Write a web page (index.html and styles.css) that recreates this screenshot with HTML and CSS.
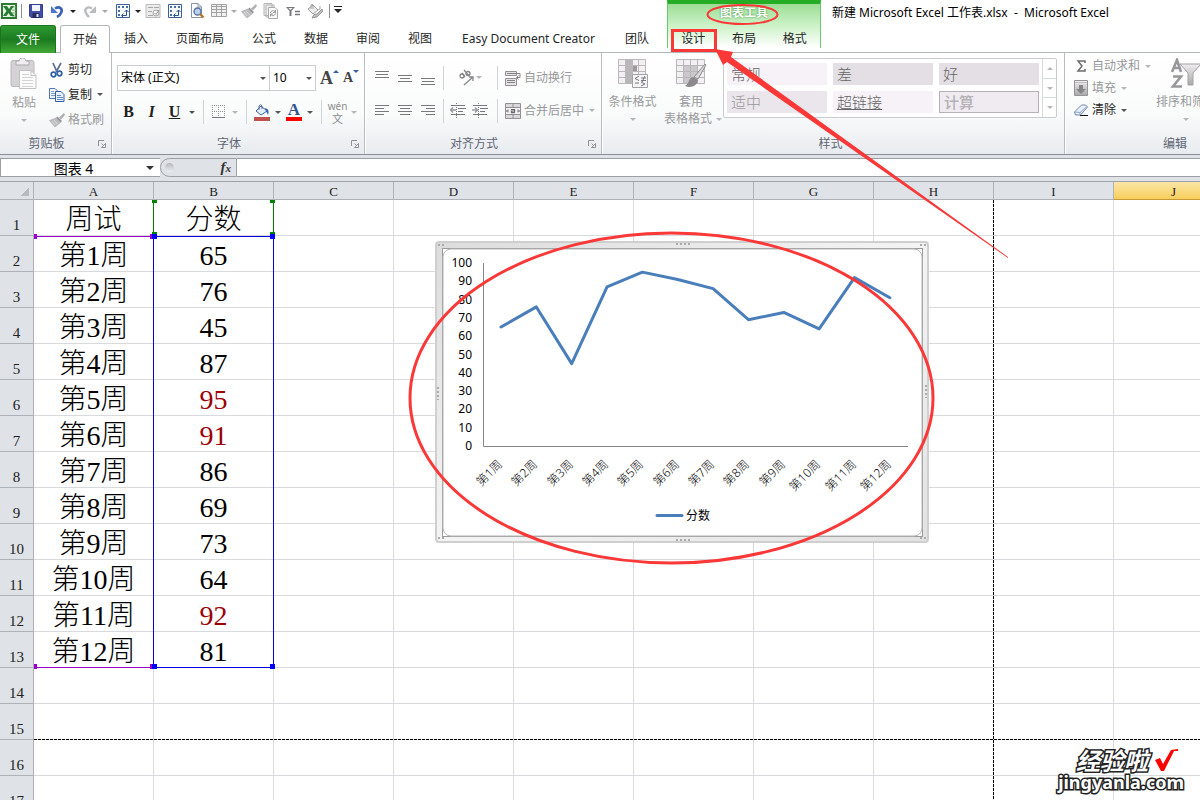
FILE: index.html
```html
<!DOCTYPE html>
<html lang="zh-CN">
<head>
<meta charset="utf-8">
<title>新建 Microsoft Excel 工作表.xlsx - Microsoft Excel</title>
<link rel="stylesheet" href="styles.css">
</head>
<body>
<svg class="defs" width="0" height="0" aria-hidden="true">
  <defs>
    <linearGradient id="gFrame" x1="0" y1="0" x2="1" y2="1"><stop offset="0" stop-color="#dcdcdc"/><stop offset=".5" stop-color="#f4f4f4"/><stop offset="1" stop-color="#e2e2e2"/></linearGradient>
    <linearGradient id="gGrey" x1="0" y1="0" x2="0" y2="1"><stop offset="0" stop-color="#f0edf0"/><stop offset="1" stop-color="#a9a7a9"/></linearGradient>
    <symbol id="brush" viewBox="0 0 16 16"><path d="M15 1 10 5.500l2 2L16 3z" fill="#b0afb1"/><path d="M8.500 4.500 13 9l-1.500 1.500L7 6z" fill="#97969a"/><path d="M7 6 .5 8.500 6 15l5.500-4.500z" fill="#bdbcbe" stroke="#b0afb2" stroke-width=".7"/><path d="m3 9 3 4M5 8l3.500 4" stroke="#dcdcdc"/></symbol>
    <symbol id="pivot" viewBox="0 0 16 16"><path d="M1.500 1.500h13v13h-13z" fill="#f4f8ff" stroke="#3d5f9a"/><path d="M3 3h2v2H3zM3 7h2v2H3zM3 11h2v2H3zM7 3h2v2H7zM11 3h2v2h-2z" fill="#4a6ca6"/><path d="M7 12.500h4.500V7M9.500 9l2-2 2 2M8.500 10.500l-2 2 2 2" fill="none" stroke="#2f548f"/></symbol>
    <symbol id="launch" viewBox="0 0 8 8"><path d="M.5 6V.5H6M3.500 3.500l2 2M7.500 3.500v4h-4z" fill="none" stroke="#8d9197"/></symbol>
  </defs>
</svg>

<div class="app">
  <header class="header">
    <div class="header-main">
      <div class="qat">
        <button class="q excel" aria-label="Excel"><svg width="16" height="16" viewBox="0 0 16 16"><path d="M1 1h14v14H1z" fill="#e9f4e5" stroke="#2b7a32" stroke-width="2"/><path d="M11 4h4M11 7h4M11 10h4M11 13h4" stroke="#7eb37f"/><path d="M2 3h4l2 3 2-3h3L9.500 8l4 5h-4L7.500 10 5.500 13H2l3.500-5z" fill="#267c31"/></svg></button>
        <i class="qsep"></i>
        <button class="q save" aria-label="保存"><svg width="14" height="14" viewBox="0 0 14 14"><path d="M.5.5h13v13H2L.5 12z" fill="#4450a8" stroke="#333f91"/><path d="M3 1h8v6H3z" fill="#f1f4ff"/><path d="M3.500 9h7v5h-7z" fill="#252d5c"/><path d="M7.500 10h2v3h-2z" fill="#dde3fa"/></svg></button>
        <button class="q undo" aria-label="撤消"><svg width="15" height="15" viewBox="0 0 15 15"><path d="M5 4.500c5-3 8 1 6 4.500-.8 2-2 3-4 4" fill="none" stroke="#3a63b5" stroke-width="2.600"/><path d="M1 2v7h7z" fill="#4a77c8"/></svg></button>
        <button class="caret c14 dark" aria-label="撤消列表"></button>
        <button class="q undo" aria-label="恢复"><svg width="15" height="15" viewBox="0 0 15 15"><path d="M10 4.500c-5-3-8 1-6 4.500.8 2 2 3 3 4" fill="none" stroke="#b9bbbe" stroke-width="2.400"/><path d="M14 2v7H7z" fill="#b9bbbe"/></svg></button>
        <button class="caret c14" aria-label="恢复列表"></button>
        <button class="q" aria-label="数据透视表"><svg width="16" height="16"><use href="#pivot"/></svg></button>
        <button class="caret c8 dark" aria-label="数据透视表列表"></button>
        <button class="q" aria-label="表单"><svg width="16" height="16" viewBox="0 0 16 16"><path d="M1 1.500h14v13H1z" fill="#ececed" stroke="#b9babc"/><path d="M3 4.500h5M3 8.500h4M3 12.500h5M9 4.500h5" stroke="#a5a6a8"/><circle cx="11" cy="10" r="3" fill="#f7f7f7" stroke="#a5a6a8"/><path d="m9.500 10 1.500 1.500L14 7" fill="none" stroke="#909193"/></svg></button>
        <button class="q" aria-label="透视图"><svg width="16" height="16"><use href="#pivot"/></svg></button>
        <button class="q" aria-label="打印预览"><svg width="16" height="16" viewBox="0 0 16 16"><path d="M2.500.5H9L12.500 4v10.500h-10z" fill="#fff" stroke="#8893a5"/><path d="M9 .5V4h3.500" fill="none" stroke="#8893a5"/><circle cx="8.500" cy="8.500" r="3.500" fill="#b7d0f0" stroke="#51719f" stroke-width="1.300"/><path d="m11 11 3.500 3.500" stroke="#b27529" stroke-width="2.400"/></svg></button>
        <button class="q" aria-label="表格"><svg width="16" height="16" viewBox="0 0 16 16"><path d="M.5 1.500h15v12H.5z" fill="#f1f1f1" stroke="#a0a1a3"/><path d="M.5 3.500h15M.5 6.500h15M.5 9.500h15M5.500 1v13M10.500 1v13" stroke="#a0a1a3"/></svg></button>
        <button class="caret c8" aria-label="表格列表"></button>
        <button class="q" aria-label="格式刷"><svg width="16" height="16"><use href="#brush"/></svg></button>
        <button class="q" aria-label="刷新"><svg width="16" height="16" viewBox="0 0 16 16"><path d="M1 .5h8v12H1zM3 2h8v12H3z" fill="#efeff0" stroke="#b3b4b6"/><path d="M5.500 4.500H12L14.500 7v8.500h-9z" fill="#fafafa" stroke="#a9aaac"/><path d="M7.500 10c.5-3 4-3 5-.5M12.500 10.500c-1 3-4 2.500-5 .5M12.500 7v2.500H10M7.500 13.500V11H10" fill="none" stroke="#98999b"/></svg></button>
        <button class="q" aria-label="筛选"><svg width="16" height="16" viewBox="0 0 16 16"><path d="M1 4h9L6.500 8v5h-2V8z" fill="#77787b"/><path d="M3.500 5h4L5.500 7z" fill="#fff"/><path d="M10 8.500h5M10 11.500h5" stroke="#77787b" stroke-width="1.500"/></svg></button>
        <button class="q" aria-label="填充颜色"><svg width="16" height="16" viewBox="0 0 16 16"><path d="m1 6 5-4 5 5-5 4z" fill="#eee" stroke="#9a9b9d"/><path d="M4 6V2q1-2 2 0v4M11 7q3 0 2-4" fill="none" stroke="#a4a5a7"/><path d="m15 6-5 5-3 .5L5 15l5-1 2-2 4-4z" fill="#c0c1c3" stroke="#969799"/></svg></button>
        <i class="qsep"></i>
        <button class="caret c12 dark more" aria-label="自定义快速访问工具栏"></button>
      </div>
      <nav class="tabs">
        <button class="tab file">文件</button>
        <button class="tab active">开始</button>
        <button class="tab">插入</button>
        <button class="tab">页面布局</button>
        <button class="tab">公式</button>
        <button class="tab">数据</button>
        <button class="tab">审阅</button>
        <button class="tab">视图</button>
        <button class="tab">Easy Document Creator</button>
        <button class="tab">团队</button>
      </nav>
    </div>
    <div class="context">
      <div class="context-title">图表工具</div>
      <nav class="context-tabs">
        <button class="tab">设计</button>
        <button class="tab">布局</button>
        <button class="tab">格式</button>
      </nav>
    </div>
    <h1 class="doc-title">新建 Microsoft Excel 工作表.xlsx&nbsp; -&nbsp; Microsoft Excel</h1>
  </header>

  <section class="ribbon">
    <div class="group clipboard">
      <div class="group-body">
        <button class="big off paste">
          <svg width="30" height="32" viewBox="0 0 30 32"><rect x="2" y="2.500" width="23" height="26" rx="2" fill="#d5d2d5" stroke="#bab7ba"/><path d="M7 3h3c0-4 7-4 7 0h3v4H7z" fill="#efedef" stroke="#aaa7aa"/><path d="M10.500 12.500H22l5 5v13H10.500z" fill="#fcfbfc" stroke="#c3c0c3"/><path d="M22 12.500v5h5" fill="none" stroke="#c3c0c3"/><path d="M13 16.500h7M13 19.500h11M13 22.500h11M13 25.500h11M13 28.500h11" stroke="#d6d3d6"/></svg>
          <span>粘贴</span><i class="tri"></i>
        </button>
        <div class="stack clip-stack">
          <button class="cmd"><svg width="16" height="16" viewBox="0 0 16 16"><path d="m4 1 4 9M12 1 7 10" stroke="#5c6f8e" stroke-width="1.700"/><circle cx="4.500" cy="12.500" r="2.300" fill="none" stroke="#2d5ea8" stroke-width="1.700"/><circle cx="10.500" cy="11.500" r="2.300" fill="none" stroke="#2d5ea8" stroke-width="1.700"/></svg>剪切</button>
          <button class="cmd"><svg width="16" height="16" viewBox="0 0 16 16"><path d="M.5 1.500H6l3 3v7H.5z" fill="#f1f6fd" stroke="#5277b4"/><path d="M2 4.500h3M2 6.500h5M2 8.500h5" stroke="#7d9ccc"/><path d="M6.500 4.500H12l3 3v7H6.500z" fill="#e9f1fc" stroke="#335fa5"/><path d="M8 8.500h4M8 10.500h6M8 12.500h6" stroke="#6389c2"/></svg>复制<i class="tri dark"></i></button>
          <button class="cmd off"><svg width="16" height="16"><use href="#brush"/></svg>格式刷</button>
        </div>
      </div>
      <div class="group-label"><span>剪贴板</span><svg width="8" height="8"><use href="#launch"/></svg></div>
    </div>

    <div class="group font">
      <div class="group-body column">
        <div class="font-row">
          <div class="combo"><select class="font-name" aria-label="字体"><option>宋体 (正文)</option></select><i class="tri dark"></i></div>
          <div class="combo"><select class="font-size" aria-label="字号"><option>10</option></select><i class="tri dark"></i></div>
          <button class="grow" aria-label="增大字号"><span>A</span><i></i></button>
          <button class="grow shrink" aria-label="减小字号"><span>A</span><i></i></button>
        </div>
        <div class="format-row">
          <button class="fmt bold">B</button>
          <button class="fmt italic">I</button>
          <button class="fmt underline">U</button>
          <i class="tri dark"></i><i class="vsep"></i>
          <button class="ico" aria-label="边框"><svg width="16" height="16" viewBox="0 0 16 16"><path d="M1 1.500h13M1 7.500h13M1.500 1v12M7.500 1v12M13.500 1v12" stroke="#8f9195" stroke-dasharray="1 1"/><path d="M1 13.500h13" stroke="#77797d"/></svg></button>
          <i class="tri"></i><i class="vsep"></i>
          <button class="ico" aria-label="填充颜色"><svg width="18" height="18" viewBox="0 0 18 18"><path d="m3 8 5-5 6 5-6 4z" fill="#e4eefb" stroke="#3c64a1"/><path d="M6 7V3q2-3 3 0v3" fill="none" stroke="#55719d"/><path d="M12 5c4 1 4 4 3 7l-2-4z" fill="#3568b3"/><path d="M1 14h16v4H1z" fill="#c0504d"/></svg></button>
          <i class="tri dark"></i>
          <button class="ico" aria-label="字体颜色"><span class="font-color">A</span></button>
          <i class="tri dark"></i><i class="vsep"></i>
          <button class="ico pinyin" aria-label="拼音"><span>wén</span><b>文</b></button>
          <i class="tri"></i>
        </div>
      </div>
      <div class="group-label"><span>字体</span><svg width="8" height="8"><use href="#launch"/></svg></div>
    </div>

    <div class="group align">
      <div class="group-body align-grid">
        <button class="ico" aria-label="顶端对齐"><svg width="16" height="16"><path d="M1 1.500h14M2 4.500h12M1 7.500h14" stroke="#77797c"/></svg></button>
        <button class="ico" aria-label="垂直居中"><svg width="16" height="16"><path d="M1 5.500h14M3 8.500h10M1 11.500h14" stroke="#77797c"/></svg></button>
        <button class="ico" aria-label="底端对齐"><svg width="16" height="16"><path d="M1 8.500h14M2 11.500h12M1 14.500h14" stroke="#77797c"/></svg></button>
        <i class="vsep"></i>
        <button class="ico wide" aria-label="方向"><svg width="18" height="18" viewBox="0 0 18 18"><g fill="none" stroke="#858689" stroke-width="1.300"><circle cx="4" cy="7" r="2"/><path d="m4 4 3 4"/><path d="m6 1 5 6"/><circle cx="10" cy="4.500" r="2"/><path d="m6 16 9-8M15 12V8h-4"/></g></svg><i class="tri"></i></button>
        <i class="vsep"></i>
        <button class="cmd off"><svg width="16" height="16" viewBox="0 0 16 16"><path d="M.5 1.500h11v4H.5zM.5 8.500h11v7H.5z" fill="#e5e3e5" stroke="#929094"/><path d="M2 3.500h11M2 10.500h8M2 12.500h8" stroke="#858387"/><path d="M13 3.500h2v4h-3M13.500 5.500l-2 2 2 2" fill="none" stroke="#858387"/></svg>自动换行</button>

        <button class="ico" aria-label="左对齐"><svg width="16" height="16"><path d="M1 2.500h14M1 5.500h9M1 8.500h14M1 11.500h9" stroke="#77797c"/></svg></button>
        <button class="ico" aria-label="居中"><svg width="16" height="16"><path d="M1 2.500h14M3 5.500h10M1 8.500h14M3 11.500h10" stroke="#77797c"/></svg></button>
        <button class="ico" aria-label="右对齐"><svg width="16" height="16"><path d="M1 2.500h14M6 5.500h9M1 8.500h14M6 11.500h9" stroke="#77797c"/></svg></button>
        <i class="vsep"></i>
        <div class="indent">
          <button class="ico" aria-label="减少缩进"><svg width="16" height="16"><path d="M1 2.500h14M8 5.500h8M8 8.500h5M1 11.500h14" stroke="#77797c"/><path d="M6.500 0v15" stroke="#77797c" stroke-dasharray="1 1"/><path d="M6 7H1M3 4.500.5 7 3 9.500" fill="none" stroke="#9a9b9e" stroke-width="1.500"/></svg></button>
          <button class="ico" aria-label="增加缩进"><svg width="16" height="16"><path d="M1 2.500h14M8 5.500h8M8 8.500h5M1 11.500h14" stroke="#77797c"/><path d="M6.500 0v15" stroke="#77797c" stroke-dasharray="1 1"/><path d="M0 7h5M3 4.500 5.500 7 3 9.500" fill="none" stroke="#9a9b9e" stroke-width="1.500"/></svg></button>
        </div>
        <i class="vsep"></i>
        <button class="cmd off"><svg width="16" height="16" viewBox="0 0 16 16"><path d="M.5.5h15v15H.5z" fill="#dbd8db" stroke="#939095"/><path d="M.5 4.500h15M.5 11.500h15M8 0v4M8 12v4" stroke="#939095"/><path d="M1 5h14v6H1z" fill="#f5f3f5"/><path d="M1.500 8H4M12 8h2.500M3 6.500 1.500 8 3 9.500M13 6.500 14.500 8 13 9.500" fill="none" stroke="#777"/><path d="M6 6.500h3.500v3.300M9.500 8H6.500v1.700h3" fill="none" stroke="#666" stroke-width="1.200"/></svg>合并后居中<i class="tri"></i></button>
      </div>
      <div class="group-label"><span>对齐方式</span><svg width="8" height="8"><use href="#launch"/></svg></div>
    </div>

    <div class="group styles">
      <div class="group-body">
        <button class="big off cond"><svg width="30" height="30" viewBox="0 0 30 30"><path d="M.5.500h27v24H.5z" fill="#f3f0f3" stroke="#bbb7bb"/><path d="M7 1h7v24H7z" fill="#b9b6b9"/><path d="M14 7h5v5h-5zM14 18h3v6h-3z" fill="#9d9a9e"/><path d="M.5 6.500h27M.5 12.500h27M.5 18.500h27M7.500.500v24M14.500.500v24M20.500.500v24" stroke="#bbb7bb"/><path d="M14.500 15.500h15v13h-15z" fill="#f6f5f6" stroke="#a3a1a4"/><path d="m21 17-4 2.500 4 2M17 24h4M23 19h5M23 21.500h5M27 17l-3 6M23 23l4 2-4 2" fill="none" stroke="#77757a"/></svg><span>条件格式</span><i class="tri"></i></button>
        <button class="big off table-fmt"><svg width="32" height="30" viewBox="0 0 32 30"><path d="M1.500.500h28v24h-28z" fill="#f3f0f3" stroke="#b9b6b9"/><path d="M8 7h15v17H8z" fill="#cbc8cb"/><path d="M1.500 6.500h28M1.500 12.500h28M1.500 18.500h28M8.500.500v24M15.500.500v24M22.500.500v24" stroke="#b9b6b9"/><path d="m31 6-8 14-4-2L30 5z" fill="#d9d7d9" stroke="#8e8b90"/><path d="M18 18c-5 1-3 6-8 9 5 2 12 1 13-6z" fill="#8d8a8e"/></svg><span>套用</span><span class="two">表格格式<i class="tri"></i></span></button>
        <div class="gallery">
          <div class="swatches">
            <button class="sw">常规</button><button class="sw bad">差</button><button class="sw good">好</button>
            <button class="sw neutral">适中</button><button class="sw link">超链接</button><button class="sw calc">计算</button>
          </div>
          <div class="scroller"><button aria-label="上一行"><i class="tri up"></i></button><button aria-label="下一行"><i class="tri"></i></button><button aria-label="其他"><i class="tri line"></i></button></div>
        </div>
      </div>
      <div class="group-label"><span>样式</span></div>
    </div>

    <div class="group edit">
      <div class="group-body">
        <div class="stack edit-stack">
          <button class="cmd off"><svg width="16" height="16" viewBox="0 0 16 16"><path d="M12 5V3H5l4 5-4 5h7v-2" fill="none" stroke="#6b6c6f" stroke-width="1.500"/></svg>自动求和<i class="tri"></i></button>
          <button class="cmd off"><svg width="16" height="16" viewBox="0 0 16 16"><path d="M1.500.500h13v15h-13z" fill="url(#gGrey)" stroke="#959497"/><path d="M2 2.500h12" stroke="#c3c1c4"/><path d="M6 5h4v4h3l-5 5-5-5h3z" fill="#858487"/></svg>填充<i class="tri"></i></button>
          <button class="cmd"><svg width="16" height="16" viewBox="0 0 16 16"><path d="m1.500 10 7-7h4l2 2-7 8h-5z" fill="#e8f0fb" stroke="#7089b5"/><path d="m2 10 5 .5 7-6M7 10.500v2" fill="none" stroke="#8fa5c9"/><path d="M7 13.500h8" stroke="#111"/></svg>清除<i class="tri dark"></i></button>
        </div>
        <button class="big off sort"><svg width="32" height="32" viewBox="0 0 32 32"><g fill="none" stroke="#98979a" stroke-width="2.600"><path d="m2 14 5-12 4 12M4 10h6"/><path d="M3 18.500h8L3 28.500h9"/></g><path d="M10 6h21L23 15v12h-5V15z" fill="url(#gGrey)" stroke="#a3a2a5"/></svg><span>排序和筛选</span><i class="tri"></i></button>
      </div>
      <div class="group-label"><span>编辑</span></div>
    </div>
  </section>

  <div class="formula-bar">
    <div class="name-box"><input type="text" value="图表 4" aria-label="名称框"><i class="tri dark"></i></div>
    <div class="fx-area"><i class="knob"></i><button class="fx" aria-label="插入函数">f<small>x</small></button></div>
    <input class="formula" type="text" aria-label="编辑栏">
  </div>

  <main class="sheet">
    <table class="cells">
      <thead><tr id="columns"><th class="corner" aria-label="全选"></th></tr></thead>
      <tbody id="rows"></tbody>
    </table>

    <svg class="ranges" width="1200" height="618" aria-hidden="true">
      <path d="M993.500 18v600M34 557.500h1166" stroke="#000" stroke-dasharray="3 1"/>
      <path d="M34 54.500h120M34 485.500h120" stroke="#9900cc"/>
      <path d="M153.500 18v36M273.500 18v36" stroke="#008000"/>
      <path d="M153.500 54.500h120v431h-120z" fill="none" stroke="#0000e0"/>
      <path d="M152 18h5v3h-5zM270 18h5v3h-5zM152 50h5v3h-5zM270 50h5v3h-5z" fill="#008000"/>
      <path d="M34 52h3v5h-3zM150 52h3v5h-3zM34 482h3v5h-3zM150 482h3v5h-3z" fill="#9900cc"/>
      <path d="M152 52h5v5h-5zM270 52h5v5h-5zM152 482h5v5h-5zM270 482h5v5h-5z" fill="#00f"/>
    </svg>

    <svg class="chart" width="494" height="303" viewBox="435 241 494 303" role="img" aria-label="分数折线图">
      <rect x="436" y="242" width="492" height="300" rx="3" fill="url(#gFrame)" stroke="#cfcfcf" stroke-width="2"/>
      <rect x="442.500" y="248.500" width="480" height="288" fill="#fff" stroke="#9b9b9b"/>
      <rect x="443" y="249" width="479" height="287" rx="8" fill="#fff" stroke="#b5b5b5"/>
      <g fill="none" stroke="#aaa" stroke-width="2" stroke-dasharray="2 2">
        <path d="M676 244h14M676 540h14M438 387v13M926 385v13M438 245h6M438 538h6M920 245h6M920 538h6"/>
      </g>
      <path d="M483.500 263v183.500H908" fill="none" stroke="#868686"/>
      <g id="plot"></g>
      <path d="M657 515.500h25" stroke="#4a7ebb" stroke-width="3" stroke-linecap="round"/>
      <text class="legend" x="686" y="520">分数</text>
    </svg>

    <div class="watermark"><div>经验啦<svg width="24" height="24" viewBox="0 0 24 24"><path d="m1 12 5-2 3 6L17 2l7-1v2h-4L10 23H7z" fill="#f00"/></svg></div><div class="site">jingyanla.com</div></div>
  </main>

  <svg class="marks" width="1200" height="800" aria-hidden="true">
    <g fill="none" stroke="#fb3838">
      <ellipse cx="671.500" cy="398" rx="261.500" ry="165" stroke-width="3"/>
      <ellipse cx="742.500" cy="14.500" rx="35" ry="9.500" stroke-width="2"/>
      <path d="M672.500 30.500h43v20h-43z" stroke-width="3"/>
    </g>
    <path d="M715 49 733 52l-2 5 277 200v1L727 62l-4 3z" fill="#fb3838"/>
  </svg>
</div>
<script src="sheet.js"></script>
</body>
</html>
```

FILE: styles.css
```css
* { box-sizing: border-box; }
body {
  margin: 0;
  background: #fff;
  color: #262626;
  font: 12px/16px "Noto Sans", "Noto Sans CJK SC", sans-serif;
}
button, input, select { font: inherit; color: inherit; background: none; border: 0; padding: 0; margin: 0; }
button { white-space: nowrap; }
svg { flex: none; }
.defs { position: absolute; }
.app { position: relative; height: 100vh; display: flex; flex-direction: column; overflow: hidden; }

/* title bar and tabs */
.header { display: flex; flex: none; border-bottom: 1px solid #b3b6bb; height: 53px; }
.header-main { flex: 0 0 667px; min-width: 0; display: flex; flex-direction: column; }
.qat { height: 25px; display: flex; align-items: center; padding-bottom: 3px; }
.q { width: 22px; height: 22px; display: flex; align-items: center; justify-content: center; }
.excel, .undo { width: 18px; }
.save { width: 24px; }
.qsep { width: 6px; height: 14px; border-right: 1px solid #8a8d91; margin-left: -2px; margin-right: 2px; }
.caret { display: flex; justify-content: center; color: #aaa; }
.caret::before, .tri { content: ""; flex: none; width: 0; height: 0; border: 3px solid transparent; border-top-color: currentColor; border-bottom: 0; }
.tri { color: #b4b6ba; }
.dark { color: #222; }
.tri.dark { color: #555; }
.c8 { width: 8px; } .c12 { width: 12px; } .c14 { width: 14px; }
.more { position: relative; }
.more::before { border-width: 4px 4px 0; }
.more::after { content: ""; position: absolute; left: 2px; top: -3px; width: 8px; height: 1px; background: #222; }
.tabs { display: flex; flex: 1; margin-bottom: -1px; }
.tab { padding: 0 14px; height: 28px; }
.tabs .tab:nth-child(9) { padding: 0 16px; }
.file { width: 56px; margin-right: 4px; color: #fff; background: linear-gradient(#2d9a31, #1c7a20 50%, #41a935); border: 1px solid #1e741d; border-bottom: 0; border-radius: 3px 3px 0 0; }
.active { width: 50px; padding: 0; background: #fff; border: 1px solid #b3b6bb; border-bottom: 0; border-radius: 3px 3px 0 0; }
.context { flex: 0 0 154px; height: 48px; border-top: 4px solid #25ae25; background: linear-gradient(#9cdd96, #c8f1c3 45%, #fff); border-left: 1px solid #6cc86a; border-right: 1px solid #6cc86a; }
.context-title { height: 21px; color: #fff; text-align: center; font-weight: 700; line-height: 18px; text-shadow: 0 0 2px #348434; }
.context-tabs { display: flex; }
.context-tabs .tab { flex: 1; padding: 0; }
.doc-title { margin: 4px 0 0 11px; font-size: 12px; font-weight: 400; line-height: 18px; color: #000; white-space: nowrap; }

/* ribbon */
.ribbon { display: flex; flex: none; height: 102px; background: linear-gradient(#fff, #fafbfb 60%, #e8ebef); border-bottom: 1px solid #8c9096; overflow: hidden; }
.group { flex: none; display: flex; flex-direction: column; border-right: 1px solid #b9bdc3; box-shadow: 1px 0 0 #fff; }
.group-body { flex: 1; display: flex; align-items: flex-start; }
.group-body.column { flex-direction: column; }
.group-label { height: 21px; display: flex; align-items: center; color: #5f6673; padding-right: 5px; }
.group-label span { flex: 1; text-align: center; }
.group-label svg { margin-left: 5px; }
.clipboard { width: 112px; }
.clipboard .group-label, .font .group-label, .align .group-label { padding-left: 0; }
.font { width: 253px; }
.align { width: 237px; }
.styles { width: 463px; }
.edit { width: 226px; }
.off { color: #97989b; }
.big { display: flex; flex-direction: column; align-items: center; padding-top: 5px; }
.big span { line-height: 16px; }
.big .tri { margin-top: 8px; }
.stack { display: flex; flex-direction: column; }
.cmd { display: flex; align-items: center; gap: 3px; text-align: left; }
.cmd .tri { margin-left: 2px; }
.paste { width: 48px; }
.paste span { margin-top: 5px; }
.clip-stack { padding: 4px 0 0 1px; }
.clip-stack .cmd { height: 25px; }

.font .group-body { padding: 12px 0 0 5px; }
.font-row { display: flex; align-items: center; }
.combo { position: relative; }
.combo select { appearance: none; height: 26px; border: 1px solid #c9ccd0; background: #fff; padding: 0 3px; color: #000; }
.combo .tri { position: absolute; right: 4px; top: 12px; }
.font-name { width: 153px; }
.font-size { width: 47px; margin-left: -1px; }
.grow { display: flex; width: 23px; margin-left: 4px; font: 700 18px/20px "Liberation Serif", serif; color: #444; }
.grow i { border: 3px solid transparent; border-bottom-color: #3560a8; border-top: 0; height: 0; margin-top: 2px; }
.grow.shrink { font-size: 14px; margin-left: 0; }
.shrink i { border-top: 3px solid #3560a8; border-bottom: 0; }
.format-row { display: flex; align-items: center; height: 28px; margin-top: 7px; }
.fmt { width: 23px; font: 700 16px/20px "Liberation Serif", serif; color: #222; }
.italic { font-style: italic; }
.underline { text-decoration: underline; }
.format-row .tri { margin: 0 3px; }
.vsep { width: 1px; height: 24px; background: #d0d3d7; margin: 0 5px; }
.ico { width: 22px; height: 22px; display: flex; align-items: center; justify-content: center; }
.format-row .ico { width: 20px; }
.font-color { width: 16px; height: 18px; border-bottom: 4px solid #f00; font: 700 17px/14px "Liberation Serif", serif; color: #315591; }
.format-row .pinyin { flex-direction: column; width: 21px; height: 26px; font-size: 10px; line-height: 12px; color: #8b8c8f; }
.pinyin b { font-weight: 400; font-size: 11px; line-height: 13px; }

.align-grid { display: grid; grid-template-columns: 23px 23px 23px 7px 47px 7px 1fr; grid-template-rows: 33px 33px; align-content: start; align-items: center; padding: 8px 0 0 6px; }
.align-grid .vsep { margin: 0 3px; }
.align-grid .cmd { margin-left: 4px; }
.wide { width: 46px; }
.indent { display: flex; }

.styles .group-body { padding-left: 2px; }
.cond { width: 57px; padding-top: 6px; }
.cond span, .table-fmt svg + span { margin-top: 5px; }
.table-fmt { width: 60px; padding-top: 6px; }
.two { display: flex; align-items: center; gap: 4px; margin: 1px 0 0 4px; }
.two .tri { margin: 0; }
.gallery { display: flex; margin: 5px 0 0 2px; border: 1px solid #c9cbd0; border-radius: 2px; background: #fff; height: 60px; }
.swatches { display: grid; grid-template-columns: repeat(3, 100px); grid-template-rows: 22px 22px; gap: 6px; padding: 4px 3px; }
.sw { background: #f6f2f8; text-align: left; padding-left: 4px; font-size: 15px; line-height: 20px; color: #666; font-weight: 300; }
.bad, .good { background: #e4dfe4; }
.neutral { background: #ebe6ec; color: #999; }
.link { text-decoration: underline; }
.calc { border: 1px solid #b5b1b6; background: #efebf1; color: #b5b1b6; font-weight: 500; }
.scroller { width: 14px; display: flex; flex-direction: column; border-left: 1px solid #d6dade; }
.scroller button { flex: 1; display: flex; align-items: center; justify-content: center; }
.scroller button + button { border-top: 1px solid #d6dade; }
.up { transform: rotate(180deg); }

.edit-stack { width: 91px; padding: 2px 0 0 8px; }
.edit-stack .cmd { height: 22px; }
.sort { width: 60px; }
.sort span { margin-top: 4px; }

/* formula bar */
.formula-bar { display: flex; flex: none; height: 27px; padding: 3px 0 4px; background: #dfe2e7; border-bottom: 1px solid #9da2a9; }
.formula-bar > * { border-top: 1px solid #9ca0a6; border-bottom: 1px solid #9ca0a6; }
.name-box { width: 160px; display: flex; align-items: center; background: #fff; border-left: 1px solid #9ca0a6; padding-right: 6px; }
.name-box input { width: 100%; text-align: center; color: #000; font-size: 14px; height: 18px; }
.name-box .tri { border-width: 4px 4px 0; color: #333; }
.fx-area { width: 77px; display: flex; align-items: center; justify-content: space-between; border-left: 1px solid #9ca0a6; border-radius: 10px 0 0 10px; border-right: 1px solid #9ca0a6; padding: 0 5px 0 4px; }
.knob { width: 9px; height: 9px; border-radius: 50%; background: linear-gradient(#b5b7bb, #eceef0); }
.fx { font: italic 700 15px/16px "Liberation Serif", serif; color: #333; }
.fx small { font-size: 11px; }
.formula { flex: 1; background: #fff; min-width: 0; }

/* worksheet */
.sheet { position: relative; flex: 1; min-height: 0; overflow: hidden; }
.cells { border-collapse: separate; border-spacing: 0; table-layout: fixed; width: 1234px; }
.cells th { background: #dfe2e7; border-right: 1px solid #adb2b9; border-bottom: 1px solid #adb2b9; font: 300 13px/15px "Liberation Serif", "Noto Sans CJK SC", serif; color: #222; padding: 0; }
.cells thead th { height: 18px; width: 120px; padding-top: 1px; }
.cells thead .corner { width: 34px; background: linear-gradient(135deg, transparent 50%, #b7bbc1 50%) 20px 5px / 9px 9px no-repeat #dfe2e7; }
.cells thead .picked { background: linear-gradient(#fbe6a6, #f7cf5c); border-bottom-color: #c99936; }
.cells tbody th { vertical-align: bottom; padding-bottom: 2px; font-size: 15px; }
.cells td { height: 36px; border-right: 1px solid #d8dadd; border-bottom: 1px solid #d8dadd; padding: 5px 0 0; text-align: center; font: 300 28px/30px "Liberation Serif", "Noto Sans CJK SC", serif; color: #000; }
.cells .high { color: #9c0006; }
.ranges { position: absolute; left: 0; top: 0; }
.chart { position: absolute; left: 435px; top: 59px; }
.chart text { font: 12px "Noto Sans", "Noto Sans CJK SC", sans-serif; fill: #000; }
.chart .value { text-anchor: end; }
.chart .category { text-anchor: end; font-weight: 300; }
.watermark { position: absolute; right: 16px; top: 566px; text-align: right; color: #fff; font: 700 24px/24px "Noto Sans CJK SC", sans-serif; -webkit-text-stroke: 3px #222; paint-order: stroke fill; }
.watermark div:first-child { font-style: italic; display: flex; justify-content: flex-end; gap: 6px; padding-right: 6px; }
.watermark .site { font: 700 18px/20px "Noto Sans", sans-serif; }
.marks { position: absolute; left: 0; top: 0; pointer-events: none; }
```

FILE: sheet.js
```js
const scores = [65, 76, 45, 87, 95, 91, 86, 69, 73, 64, 92, 81];
const columns = "ABCDEFGHIJ".split("");
const rowCount = 17;

document.getElementById("columns").insertAdjacentHTML("beforeend",
  columns.map(c => `<th scope="col"${c === "J" ? ' class="picked"' : ""}>${c}</th>`).join(""));

const rows = [];
for (let r = 1; r <= rowCount; r++) {
  const score = scores[r - 2];
  const cells = columns.map((c, i) => {
    if (r === 1 && i < 2) return `<td>${["周试", "分数"][i]}</td>`;
    if (score !== undefined && i === 0) return `<td>第${r - 1}周</td>`;
    if (score !== undefined && i === 1) return `<td${score > 90 ? ' class="high"' : ""}>${score}</td>`;
    return "<td></td>";
  });
  rows.push(`<tr><th scope="row">${r}</th>${cells.join("")}</tr>`);
}
document.getElementById("rows").innerHTML = rows.join("");

const x = i => 501 + i * 35.35;
const y = v => 446 - v * 1.83;
let plot = "";
for (let v = 0; v <= 100; v += 10) {
  plot += `<text class="value" x="472" y="${Math.round(y(v)) + 4}">${v}</text>`;
}
scores.forEach((s, i) => {
  const cx = Math.round(x(i)) + 2;
  plot += `<text class="category" x="${cx}" y="465" transform="rotate(-45 ${cx} 465)">第${i + 1}周</text>`;
});
plot += `<polyline points="${scores.map((s, i) => `${x(i)},${y(s)}`).join(" ")}" fill="none" stroke="#4a7ebb" stroke-width="3" stroke-linejoin="round" stroke-linecap="round"/>`;
document.getElementById("plot").innerHTML = plot;
```
